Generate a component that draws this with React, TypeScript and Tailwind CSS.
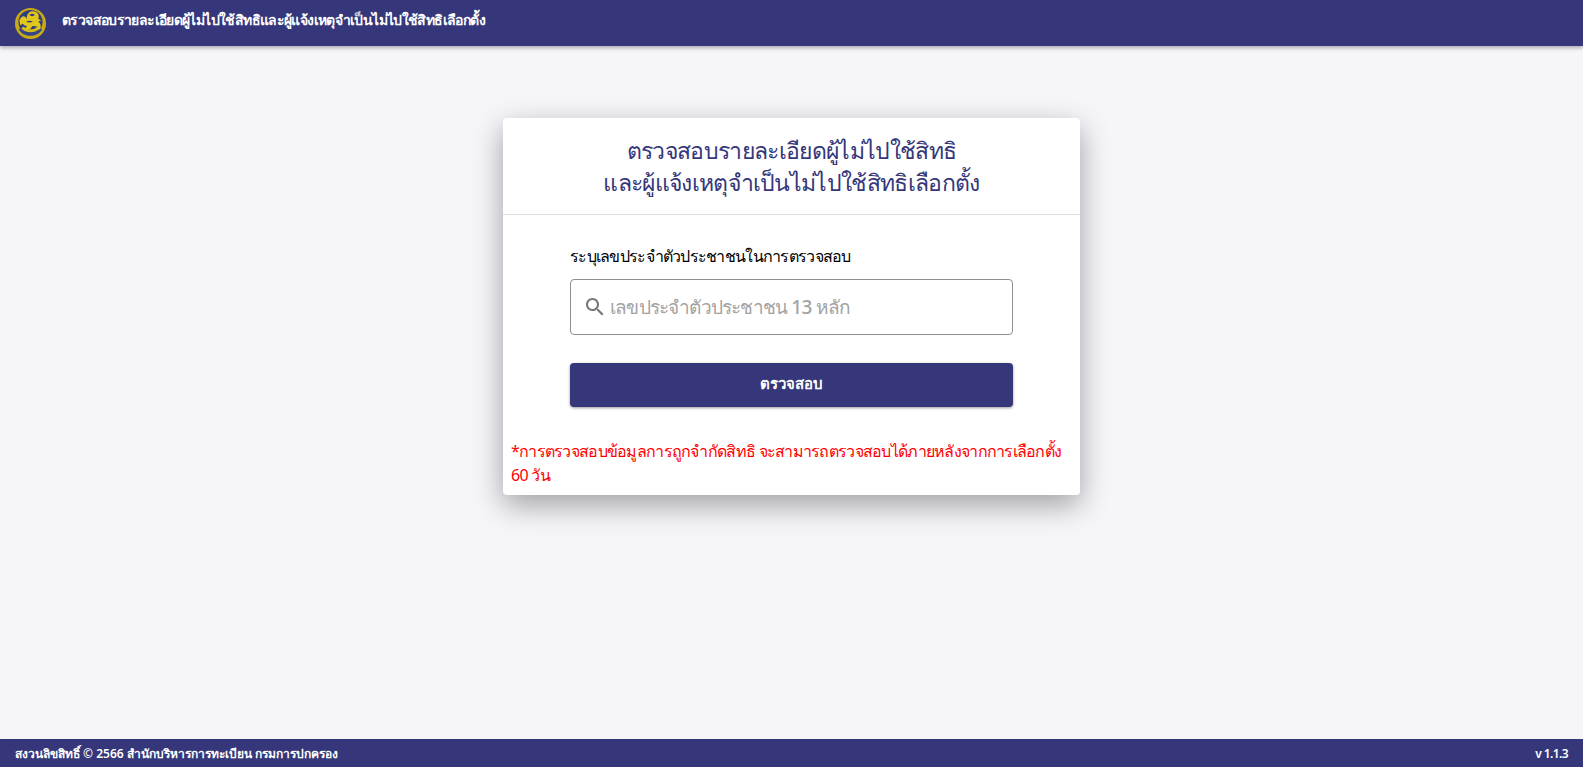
import React from "react";

const font = { fontFamily: '"Noto Sans", "Open Sans", Roboto, sans-serif' };

function Emblem() {
  return (
    <svg viewBox="0 0 32 32" className="h-[31px] w-[31px] shrink-0">
      <circle cx="16" cy="16" r="16" fill="#c9aa14" />
      <circle cx="16" cy="14.5" r="12.5" fill="#2f3f7c" />
      <path d="M4 22 C8 31 24 31 28 22 L25.5 20.5 C22 27 10 27 6.5 20.5 Z" fill="#34458a" />
      <path d="M6.5 21 C10 26.5 22 26.5 25.5 21 L23 19 C20 23 12 23 9 19 Z" fill="#d8bb18" />
      {/* lion */}
      <path
        d="M4.5 13 C6.5 7 11 7.5 12 11.5 C12 6 15 2.5 19.5 3.5 C24 4 25.5 8 24 11 L27 13 L24 14 C27 16.5 27 19.5 26 22 L23 22 L23 19 L18 18.5 L15.5 22 L10 22 L12.5 18.5 C10 18.5 9 17.5 8 16 L5.5 18 Z"
        fill="#e3c61c"
      />
      <path d="M15 7 C16.5 5.5 19 5.5 20.5 7 C19 9 16.5 9 15 7 Z M11.5 14 C13.5 12.8 16.5 12.8 18.5 14 C16.5 15.4 13.5 15.4 11.5 14 Z" fill="#2f3f7c" />
    </svg>
  );
}

export default function App() {
  return (
    <div className="flex h-[767px] flex-col overflow-hidden bg-[#f5f5fa]" style={font}>
      <header className="z-10 flex h-[46px] shrink-0 items-center gap-[16px] bg-[#35377a] pl-[15px] shadow-[0_2px_4px_rgba(0,0,0,0.3)]">
        <Emblem />
        <h1 className="pb-[7px] text-[14px] font-semibold tracking-[-0.62px] text-white">
          ตรวจสอบรายละเอียดผู้ไม่ไปใช้สิทธิและผู้แจ้งเหตุจำเป็นไม่ไปใช้สิทธิเลือกตั้ง
        </h1>
      </header>

      <main className="flex flex-1 justify-center pt-[72px]">
        <div className="h-[377px] w-[577px] rounded bg-white shadow-[0_10px_30px_rgba(0,0,0,0.35)]">
          <div className="flex h-[97px] flex-col items-center justify-center border-b border-[#dedede] text-center text-[23px] leading-8 tracking-[-0.67px] text-[#35377a]">
            <div>ตรวจสอบรายละเอียดผู้ไม่ไปใช้สิทธิ</div>
            <div>และผู้แจ้งเหตุจำเป็นไม่ไปใช้สิทธิเลือกตั้ง</div>
          </div>
          <div className="px-[67px] pt-[29px]">
            <label className="block text-[16px] leading-6 tracking-[-0.72px] text-black">ระบุเลขประจำตัวประชาชนในการตรวจสอบ</label>
            <div className="mt-[11px] flex h-[56px] items-center gap-[3px] rounded border border-[#8f8f8f] pl-[12px]">
              <svg viewBox="0 0 24 24" className="h-6 w-6 shrink-0 fill-[#757575]">
                <path d="M15.5 14h-.79l-.28-.27C15.41 12.59 16 11.11 16 9.5 16 5.91 13.09 3 9.5 3S3 5.91 3 9.5 5.91 16 9.5 16c1.61 0 3.09-.59 4.23-1.57l.27.28v.79l5 4.99L20.49 19l-4.99-5zm-6 0C7.01 14 5 11.99 5 9.5S7.01 5 9.5 5 14 7.01 14 9.5 11.99 14 9.5 14z" />
              </svg>
              <span className="text-[19px] font-medium tracking-[-0.8px] text-[#a3a3a3]">เลขประจำตัวประชาชน 13 หลัก</span>
            </div>
            <button className="mt-[28px] h-[44px] w-full rounded bg-[#35377a] pb-[3px] text-[15px] font-semibold text-white shadow-[0_1px_3px_rgba(0,0,0,0.4)]">
              ตรวจสอบ
            </button>
          </div>
          <p className="mt-[32px] px-2 text-[16px] leading-6 tracking-[-0.72px] text-[#ff0000]">
            *การตรวจสอบข้อมูลการถูกจำกัดสิทธิ จะสามารถตรวจสอบได้ภายหลังจากการเลือกตั้ง 60 วัน
          </p>
        </div>
      </main>

      <footer className="flex h-[28px] shrink-0 items-center justify-between bg-[#35377a] px-[15px] pt-[2px] text-[12px] font-semibold text-white">
        <span>สงวนลิขสิทธิ์ © 2566 สำนักบริหารการทะเบียน กรมการปกครอง</span>
        <span className="tracking-[-0.6px]">v 1.1.3</span>
      </footer>
    </div>
  );
}
